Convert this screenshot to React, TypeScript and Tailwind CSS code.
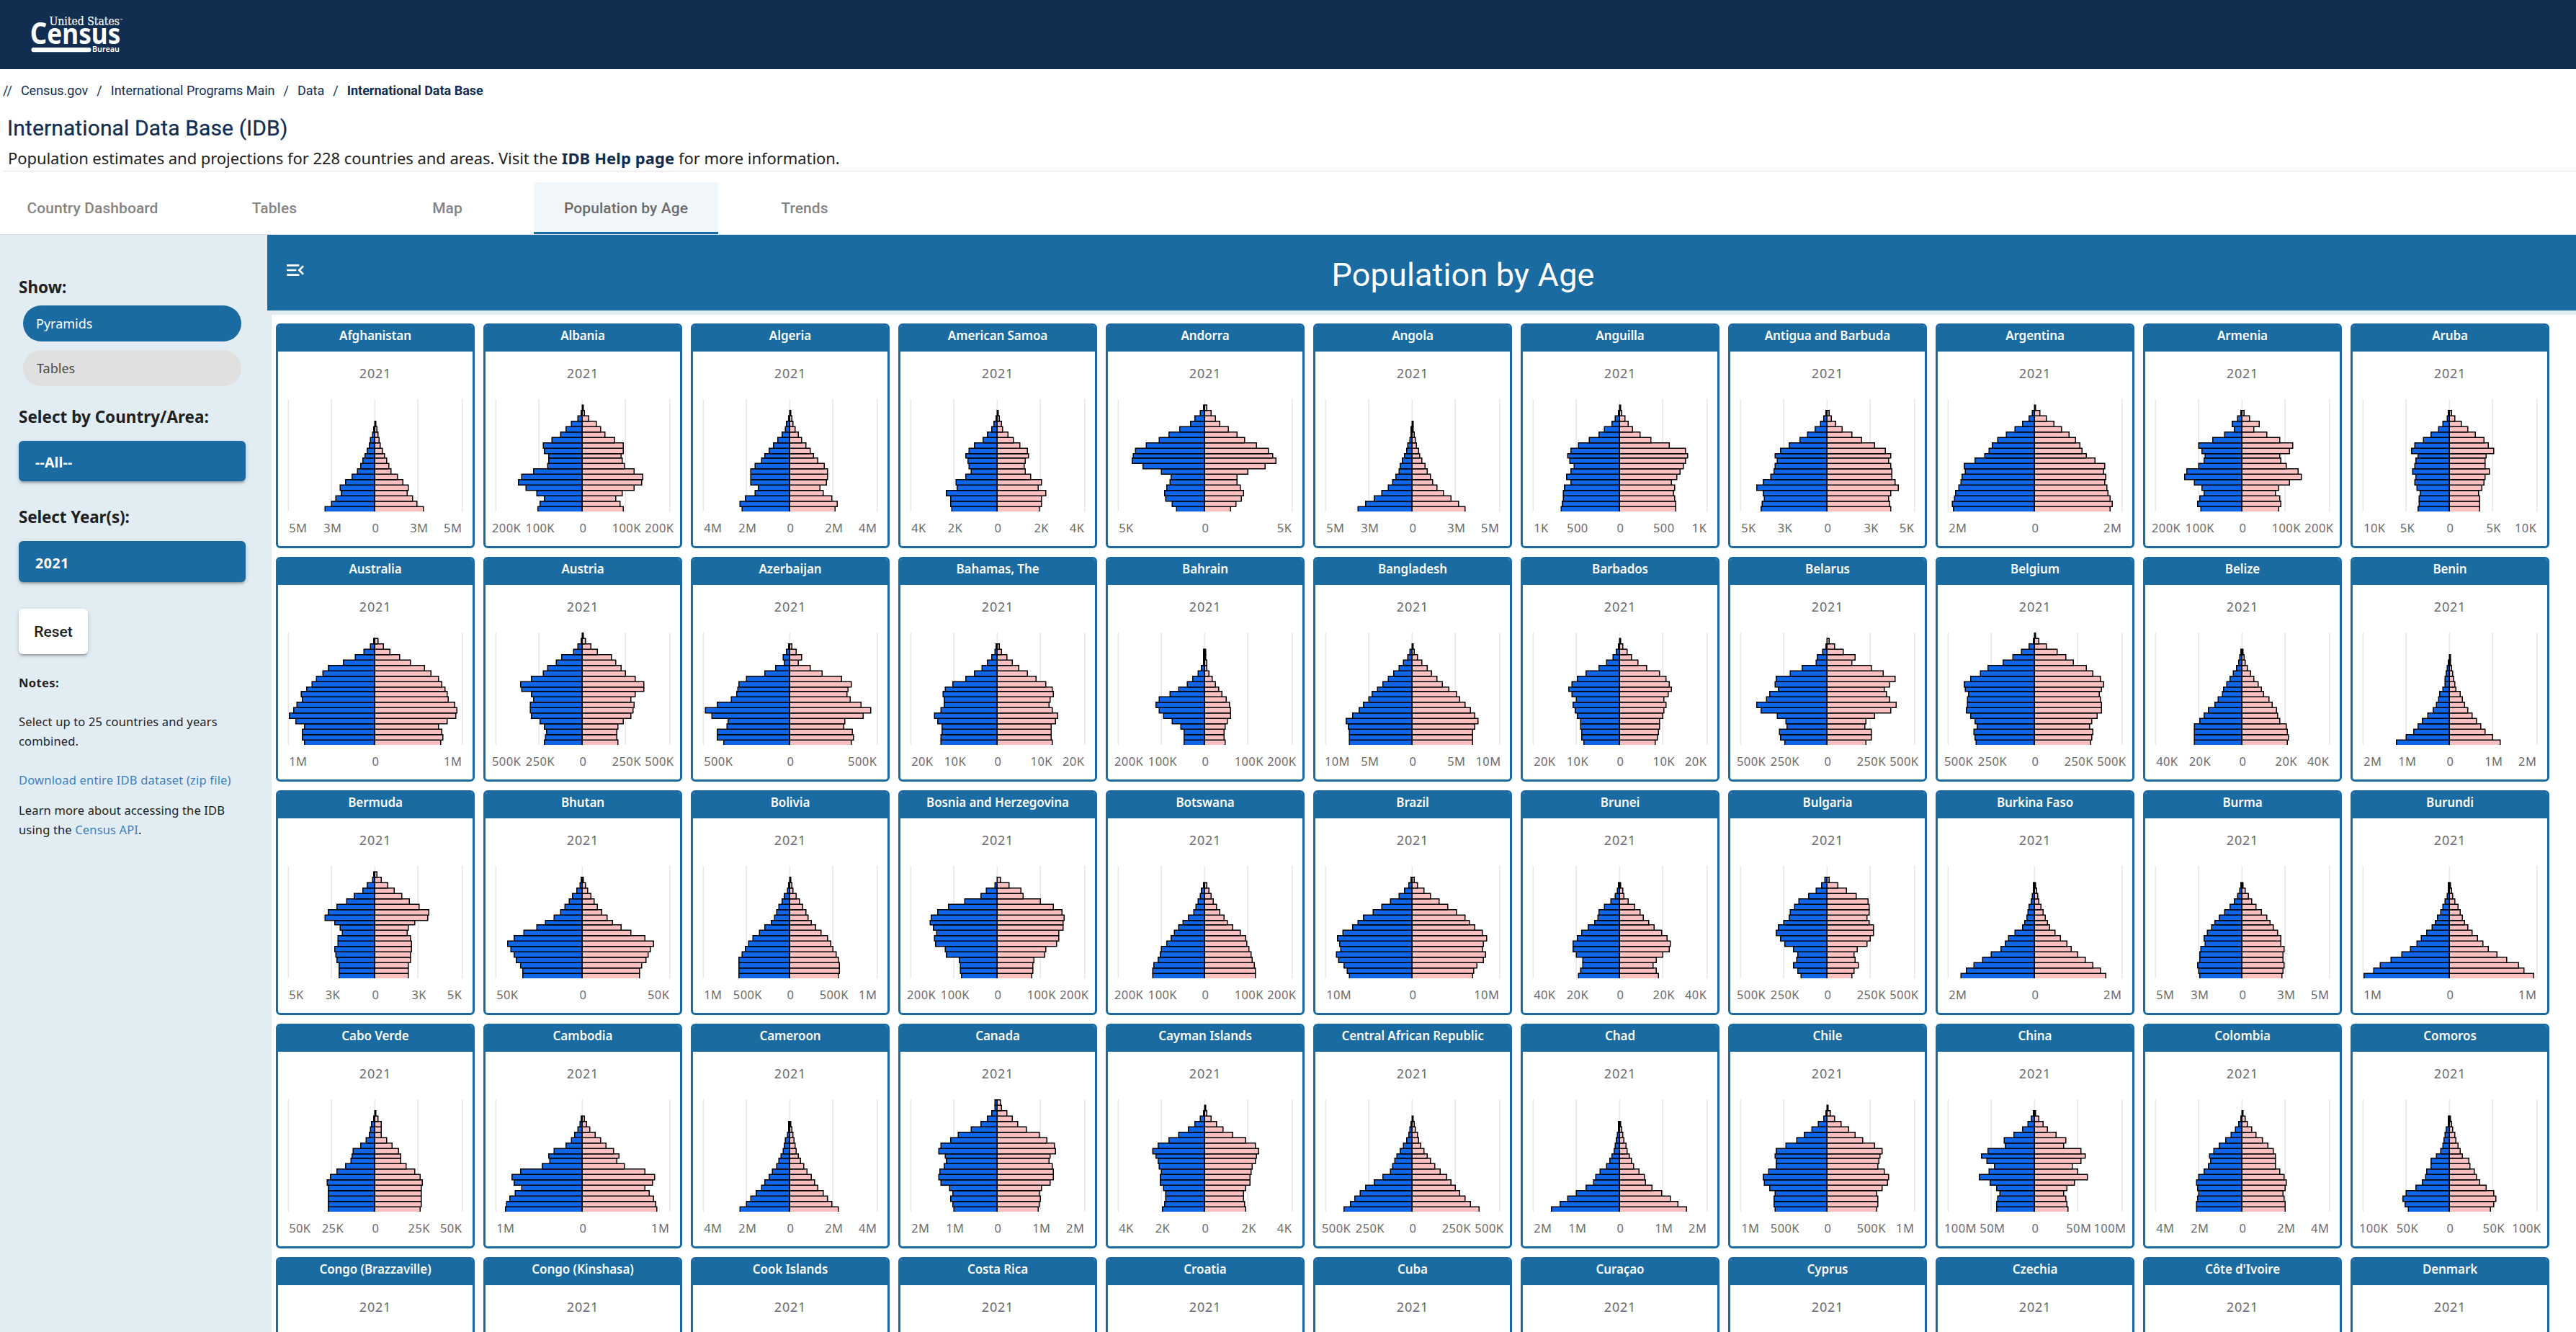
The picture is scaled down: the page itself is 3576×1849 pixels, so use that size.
import React from 'react';

type Pyramid = {
  name: string;
  axis: string[];
  // Bar lengths by five-year age group, youngest first.
  male: number[];
  female: number[];
};

const p = (name: string, axis: string, male: number[] = [], female: number[] = []): Pyramid => ({
  name,
  axis: axis ? axis.split(' ') : [],
  male,
  female,
});

const COUNTRIES: Pyramid[] = [
  p('Afghanistan', '5M 3M', [46,40,36,31,32,27,21,16,13,11,9,7,5,4,2,1,0], [45,39,35,30,31,26,21,15,13,11,9,7,5,4,3,2,1]),
  p('Albania', '200K 100K', [41,39,35,42,52,59,56,45,32,31,31,35,36,28,20,15,10,4,1,0], [38,35,31,37,48,55,56,48,39,37,36,38,38,30,21,17,13,6,2,1]),
  p('Algeria', '4M 2M', [44,46,41,32,29,36,36,36,32,26,23,19,15,11,7,4,3,1,0], [42,44,39,31,28,34,35,35,32,26,22,19,15,11,8,5,3,2,1]),
  p('American Samoa', '4K 2K', [42,43,43,47,37,38,29,24,26,27,29,26,21,13,9,5,3,1,0], [39,41,41,45,38,41,31,26,25,26,29,28,21,15,10,5,4,2,1]),
  p('Andorra', '5K', [26,30,36,37,35,32,31,40,57,67,66,64,54,42,33,23,13,9,4,1], [24,29,34,36,33,30,30,40,56,66,63,59,48,37,30,22,14,10,6,2]),
  p('Angola', '5M 3M', [50,43,35,28,22,18,15,12,11,9,7,5,4,2,1,1,0], [49,43,36,29,23,19,17,14,12,9,7,6,4,3,2,1,1]),
  p('Anguilla', '1K 500', [54,53,52,52,51,45,49,45,42,46,48,45,38,28,19,14,7,4,1,0], [52,52,51,50,51,48,53,56,59,61,63,61,46,29,19,12,8,5,2,1]),
  p('Antigua and Barbuda', '5K 3K', [61,60,58,59,65,59,52,49,48,46,48,43,35,25,18,11,6,3,1], [59,58,57,59,66,63,60,60,59,57,59,54,44,32,23,14,8,4,2]),
  p('Argentina', '2M', [75,76,74,73,70,68,67,64,65,55,46,42,39,34,26,18,11,5,2,0], [70,72,70,68,67,65,66,64,65,56,48,44,42,38,32,25,18,11,5,1]),
  p('Armenia', '200K 100K', [38,41,39,35,37,44,53,51,40,35,34,37,40,27,16,7,9,4,1], [34,36,35,31,34,44,55,52,41,36,35,44,47,35,23,11,16,7,2]),
  p('Aruba', '10K 5K', [29,28,28,27,30,32,31,34,32,31,29,35,32,24,17,10,6,2,1], [28,28,28,27,30,32,33,37,33,33,34,41,36,32,24,17,11,5,2]),
  p('Australia', '1M', [65,67,67,65,73,79,75,72,67,68,63,58,54,48,43,29,18,10,4,1], [61,63,62,59,67,75,76,74,68,67,65,62,59,52,46,33,23,14,8,3]),
  p('Austria', '500K 250K', [35,34,33,35,39,47,48,48,45,47,56,57,47,36,32,24,19,8,4,1,0], [33,32,32,33,38,45,47,48,45,49,57,57,49,40,36,31,27,14,8,3,1]),
  p('Azerbaijan', '500K', [61,67,67,58,57,72,78,67,54,49,48,47,40,23,13,5,6,3,1], [57,59,58,50,51,68,75,66,56,53,54,57,48,30,19,8,11,6,2]),
  p('Bahamas, The', '20K 10K', [52,52,51,51,55,58,52,49,49,50,48,41,29,21,14,9,5,2,1], [51,50,50,50,54,56,51,48,49,52,51,45,36,28,20,14,9,4,2]),
  p('Bahrain', '200K 100K', [19,19,19,22,30,38,42,45,42,32,24,16,11,6,3,1,1,1], [19,18,18,19,21,24,24,23,20,16,13,10,7,4,2,2,1,1]),
  p('Bangladesh', '10M 5M', [58,58,58,59,61,55,49,45,40,37,32,27,22,17,12,8,4,2,0], [56,56,56,58,61,58,54,49,44,41,34,28,23,18,14,9,5,2,1]),
  p('Barbados', '20K 10K', [33,35,35,36,36,39,41,43,40,44,47,44,39,31,19,12,6,3,1,0], [33,35,36,37,37,40,41,43,41,45,48,46,43,37,25,17,11,7,3,1]),
  p('Belarus', '500K 250K', [39,43,44,37,38,46,61,65,56,53,45,48,47,34,23,10,9,4,1,0], [36,41,41,35,36,44,59,64,58,55,53,58,63,52,41,23,26,15,7,2]),
  p('Belgium', '500K 250K', [54,55,56,53,55,59,63,62,62,61,64,65,59,50,43,29,20,12,5,1,0], [52,53,54,51,53,58,62,62,61,60,62,64,61,54,48,36,29,21,11,4,1]),
  p('Belize', '40K 20K', [44,44,44,44,39,35,31,25,22,18,17,14,11,8,5,3,2,1], [42,43,42,41,35,33,32,28,25,20,18,15,11,8,5,3,2,1]),
  p('Benin', '2M 1M', [49,40,33,29,25,20,15,12,10,9,6,4,4,3,2,1,0], [47,40,33,29,25,21,17,14,12,10,6,5,4,3,2,1,1]),
  p('Bermuda', '5K 3K', [33,33,33,35,36,37,34,34,30,32,37,46,43,35,26,19,11,7,2,1], [31,31,31,33,33,34,34,33,30,31,37,49,50,41,32,25,18,12,6,2]),
  p('Bhutan', '50K', [55,55,57,61,63,66,69,63,54,42,34,26,20,16,12,9,5,2,1], [53,53,55,59,61,63,66,58,45,36,28,23,18,14,11,8,5,3,1]),
  p('Bolivia', '1M 500K', [47,47,47,47,44,41,38,34,28,23,17,14,12,10,7,5,2,1,0], [45,46,46,45,43,40,38,35,29,24,20,17,15,12,9,6,3,2,1]),
  p('Bosnia and Herzegovina', '200K 100K', [33,34,34,35,47,48,57,58,56,59,62,61,55,45,30,15,10,2,0], [32,33,33,34,44,45,55,57,57,61,61,62,60,52,40,24,22,11,3]),
  p('Botswana', '200K 100K', [48,48,47,43,41,40,35,31,28,24,20,15,10,8,6,4,3,1], [47,47,46,44,43,41,39,38,33,26,21,18,14,11,8,6,4,2]),
  p('Brazil', '10M', [58,60,63,68,70,66,67,69,64,55,50,45,36,28,20,12,7,3,1], [56,57,60,66,68,65,66,69,65,58,53,49,41,33,25,17,11,5,2]),
  p('Brunei', '40K 20K', [38,36,34,34,40,43,43,39,35,29,23,20,19,14,8,4,2,1], [36,34,31,34,40,46,47,44,39,32,27,22,19,14,8,4,3,1]),
  p('Bulgaria', '500K 250K', [24,27,31,28,27,31,39,43,47,45,40,35,34,30,26,17,10,5,2], [23,25,29,26,25,28,37,40,43,43,39,37,39,39,38,27,18,10,2]),
  p('Burkina Faso', '2M', [68,63,56,48,40,31,27,24,18,11,9,7,6,5,3,2,1,1], [66,61,54,47,40,34,30,24,19,14,12,10,8,6,4,3,2,1]),
  p('Burma', '5M 3M', [39,40,41,39,39,38,34,35,32,28,25,21,16,11,7,4,2,1], [37,38,39,38,38,39,36,36,33,29,26,23,18,13,9,6,3,1]),
  p('Burundi', '1M', [79,70,64,54,44,36,30,26,21,16,13,11,8,6,4,2,1,1], [78,69,64,53,44,36,31,26,21,17,14,12,10,8,5,3,2,1]),
  p('Cabo Verde', '50K 25K', [43,43,43,43,43,44,41,35,27,22,21,20,13,8,5,4,3,1,0], [42,43,43,43,43,44,42,37,29,24,24,22,16,11,6,6,6,3,1]),
  p('Cambodia', '1M', [71,70,67,62,56,63,65,57,37,30,31,26,15,10,7,4,2,1], [69,68,66,62,58,65,67,58,39,32,34,29,22,17,12,7,4,2]),
  p('Cameroon', '4M 2M', [46,40,36,31,26,23,19,16,12,10,8,6,5,4,2,1,1], [45,39,35,31,26,23,20,16,13,10,8,6,5,4,3,2,1]),
  p('Canada', '2M 1M', [40,41,43,41,44,52,54,53,49,47,48,54,52,43,36,24,15,9,5,2,2], [38,39,40,39,41,49,52,52,51,48,49,54,53,46,39,27,19,14,9,4,3]),
  p('Cayman Islands', '4K 2K', [39,37,36,36,38,41,41,40,42,43,45,48,43,33,24,15,9,4,1,0], [38,37,36,36,38,42,42,43,44,47,48,50,47,38,26,17,11,6,2,1]),
  p('Central African Republic', '500K 250K', [63,57,53,48,43,35,27,20,18,16,14,11,8,5,3,2,1,0], [62,54,49,44,40,36,32,26,21,17,14,11,8,6,5,3,2,1]),
  p('Chad', '2M 1M', [63,55,48,40,31,24,22,18,12,9,7,5,4,3,2,1,1], [62,54,47,39,30,24,23,18,13,11,9,7,6,4,3,2,1]),
  p('Chile', '1M 500K', [48,49,49,48,53,58,59,54,47,47,48,47,38,28,21,14,8,3,1,0], [46,47,47,46,51,56,57,53,47,48,49,51,44,33,26,20,13,7,3,1]),
  p('China', '100M 50M', [35,35,34,32,35,41,51,42,37,44,49,43,27,28,19,11,6,3,1], [31,30,29,27,30,37,49,40,35,43,47,43,27,29,20,12,8,4,1]),
  p('Colombia', '4M 2M', [42,42,41,40,41,42,40,35,31,29,30,26,21,15,10,6,3,1,0], [40,40,39,38,40,41,39,35,31,31,31,29,24,19,13,9,5,3,1]),
  p('Comoros', '100K 50K', [38,41,43,40,31,25,22,21,17,17,12,8,6,5,4,3,1,1], [38,41,43,41,34,28,25,23,19,18,12,10,8,6,5,3,2,1]),
  ...['Congo (Brazzaville)', 'Congo (Kinshasa)', 'Cook Islands', 'Costa Rica', 'Croatia', 'Cuba', 'Curaçao', 'Cyprus', 'Czechia', "Côte d'Ivoire", 'Denmark'].map((n) => p(n, '')),
];

// Upper edge of the bar for each age group, youngest first; the plot is 104 units high.
const TOPS = [99.5, 94.5, 89.5, 84.5, 79.5, 74.5, 69.5, 64.5, 59.5, 54.5, 50.5, 45.5, 40.5, 35.5, 30.5, 25.5, 20.5, 15.5, 10.5, 5.5, 0.5];
const barHeight = (i: number) => (i === 0 ? 5 : TOPS[i - 1] - TOPS[i]);
const MID = 89.5;

function PyramidChart({ axis, male, female }: Pyramid) {
  const [outer, inner] = axis;
  const crowded = !!inner && outer.length === 4;
  const inset = crowded ? 6 : inner && outer === '10M' ? 8.6 : 10.1;
  const lines = inner ? [9.5, 49.5, 89.5, 129.5, 170.5] : [9.5, 89.5, 170.5];
  return (
    <svg viewBox="0 0 180 136" className="block h-[204px] w-[270px]">
      <svg x="0" y="0" width="180" height="104" viewBox="0 0 180 104">
        {lines.map((x) => (
          <line key={x} x1={x} x2={x} y1="0" y2="104" stroke="#e6e6e6" />
        ))}
        <g stroke="#000" fill="#0f66e8">
          {male.map((w, i) => (
            <rect key={i} x={MID - w} y={TOPS[i]} width={w} height={barHeight(i)} />
          ))}
        </g>
        <g stroke="#000" fill="#fcc0c0">
          {female.map((w, i) => (
            <rect key={i} x={MID} y={TOPS[i]} width={w} height={barHeight(i)} />
          ))}
        </g>
      </svg>
      <g className="fill-[#6b6b6b] font-['Noto_Sans',sans-serif] text-[11px] tracking-[0.28px]">
        <text x={inset} y="123.6">{outer}</text>
        {inner && <text x="50.6" y="123.6" textAnchor="middle">{inner}</text>}
        <text x="90.3" y="123.6" textAnchor="middle">0</text>
        {inner && <text x="130.5" y="123.6" textAnchor="middle">{inner}</text>}
        <text x={180.3 - inset} y="123.6" textAnchor="end">{outer}</text>
      </g>
    </svg>
  );
}

function CountryCard(country: Pyramid) {
  return (
    <section className="h-[312px] overflow-hidden rounded-[6px] border-[3px] border-[#196ba1] bg-white text-center">
      <h3 className="h-9 bg-[#196ba1] text-[17px] leading-[28px] font-semibold tracking-[-0.1px] text-white">{country.name}</h3>
      <div className="h-[66px] text-[18px] leading-[60px] tracking-[0.8px] text-[#6b6b6b]">2021</div>
      {country.axis.length > 0 && <PyramidChart {...country} />}
    </section>
  );
}

function CensusLogo() {
  return (
    <svg viewBox="0 0 140 60" className="h-[60px] w-[140px] overflow-visible" fill="#fff">
      <text x="28.5" y="17.2" fontSize="16.5" textLength="97.5" lengthAdjust="spacingAndGlyphs" className="font-['DejaVu_Serif',serif]" stroke="#fff" strokeWidth="0.2">United States</text>
      <text x="126.8" y="11" fontSize="4.5" className="font-['Noto_Sans',sans-serif]">™</text>
      <text x="1.8" y="42.6" fontSize="41" fontWeight="700" textLength="23.5" lengthAdjust="spacingAndGlyphs" className="font-['Noto_Sans',sans-serif]">C</text>
      <text x="25.3" y="42.6" fontSize="40" fontWeight="700" textLength="102" lengthAdjust="spacingAndGlyphs" className="font-['Noto_Sans',sans-serif]">ensus</text>
      <rect x="3.5" y="48" width="83" height="6.2" rx="3" />
      <text x="88" y="53.8" fontSize="11.5" fontWeight="600" textLength="38" lengthAdjust="spacingAndGlyphs" className="font-['Noto_Sans',sans-serif]">Bureau</text>
    </svg>
  );
}

const raised = 'shadow-[0_4px_2px_-3px_rgba(0,0,0,.2),0_3px_3px_rgba(0,0,0,.14),0_2px_7px_rgba(0,0,0,.12)]';

function Sidebar() {
  return (
    <aside className="w-[371px] shrink-0 bg-[#e2edf3] pt-[56px] pr-[30px] pl-[26px] text-[#212121]">
      <h2 className="text-[22.5px] leading-[34px] font-bold">Show:</h2>
      <div className="mt-2 ml-[6px] flex flex-col gap-3 text-[18px]">
        <div className="flex h-[50px] w-[303px] items-center rounded-full bg-[#196ba1] pt-px pl-[18px] text-white">Pyramids</div>
        <div className="flex h-[50px] w-[303px] items-center rounded-full bg-[#e0e0e0] pt-px pl-[19px] text-[#4a4a4a]">Tables</div>
      </div>
      <h2 className="mt-[26px] text-[22.5px] leading-[34px] font-bold">Select by Country/Area:</h2>
      <div className={`mt-4 flex h-[56px] items-center rounded-[6px] bg-[#196ba1] pt-1 pl-[23px] text-[19.5px] font-bold tracking-[0.2px] text-white ${raised}`}>--All--</div>
      <h2 className="mt-[33px] text-[22.5px] leading-[34px] font-bold tracking-[-0.15px]">Select Year(s):</h2>
      <div className={`mt-4 flex h-[57px] items-center rounded-[6px] bg-[#196ba1] pt-1 pl-[23px] text-[19.5px] font-bold tracking-[0.6px] text-white ${raised}`}>2021</div>
      <button className={`mt-[37px] flex h-[63px] w-[96px] items-center justify-center rounded-[6px] bg-white pt-[3px] font-['Roboto',sans-serif] text-[21px] font-medium ${raised}`}>Reset</button>
      <div className="text-[16.5px] leading-[27px] tracking-[0.15px] whitespace-nowrap">
        <p className="mt-[26px] font-bold tracking-[0.4px]">Notes:</p>
        <p className="mt-[27px]">Select up to 25 countries and years<br />combined.</p>
        <p className="mt-[27px] tracking-[0.2px] text-[#3d7fbd]">Download entire IDB dataset (zip file)</p>
        <p className="mt-[15px]">Learn more about accessing the IDB<br />using the <span className="text-[#3d7fbd]">Census API</span>.</p>
      </div>
    </aside>
  );
}

const tabBase = 'flex h-[72px] items-center justify-center pt-[2px]';

export default function App() {
  return (
    <div className="flex h-[1849px] w-full flex-col overflow-hidden bg-white font-['Noto_Sans',sans-serif] text-[#212121]">
      <header className="h-[96px] shrink-0 bg-[#112e51] pt-[18px] pl-[40px]">
        <CensusLogo />
      </header>
      <nav className="flex h-[58px] shrink-0 items-center gap-[12px] pl-1 font-['Roboto',sans-serif] text-[18px] text-[#112e51]">
        <span>//</span><span>Census.gov</span><span>/</span><span>International Programs Main</span><span>/</span><span>Data</span><span>/</span><span className="font-bold">International Data Base</span>
      </nav>
      <h1 className="h-[48px] shrink-0 pl-[10px] font-['Roboto',sans-serif] text-[30px] leading-[48px] font-normal tracking-[0.12px] text-[#112e51] [-webkit-text-stroke:0.3px_#112e51]">International Data Base (IDB)</h1>
      <p className="h-[35px] shrink-0 pl-[11px] text-[22px] leading-[35px] tracking-[-0.06px] text-[#212121]">
        Population estimates and projections for 228 countries and areas. Visit the <b className="tracking-[0.1px] text-[#112e51]">IDB Help page</b> for more information.
      </p>
      <div className="ml-1 h-px shrink-0 bg-[#e2e4e6]" />
      <div className="flex shrink-0 border-b border-[#dcdfe1] pt-[15px] font-['Roboto',sans-serif] text-[21px] font-medium tracking-[0.08px] text-[#858585]">
        <div className={`${tabBase} w-[261px] pr-[4px]`}>Country Dashboard</div>
        <div className={`${tabBase} w-[240px]`}>Tables</div>
        <div className={`${tabBase} w-[240px]`}>Map</div>
        <div className="flex h-[72px] w-[256px] items-center justify-center border-b-[3px] border-[#196ba1] bg-[#f0f6f9] pt-[5px] text-[#6a6b6c]">Population by Age</div>
        <div className={`${tabBase} w-[240px]`}>Trends</div>
      </div>
      <div className="flex min-h-0 grow">
        <Sidebar />
        <main className="flex min-w-0 grow flex-col">
          <div className="flex h-[105px] shrink-0 bg-[#196ba1] text-white">
            <div className="w-[115px] pt-[33px] pl-[23px]">
              <svg viewBox="0 0 24 24" className="h-8 w-8" fill="currentColor">
                <path d="M3 18h13v-2H3v2zm0-5h10v-2H3v2zm0-7v2h13V6H3zm18 9.59L17.42 12 21 8.41 19.59 7l-5 5 5 5L21 15.59z" />
              </svg>
            </div>
            <h2 className="grow pt-[3px] text-center font-['Roboto',sans-serif] text-[45px] leading-[105px] tracking-[0.15px]">Population by Age</h2>
          </div>
          <div className="min-h-0 grow border-t-[6px] border-l-[6px] border-[#e2edf3] pt-3 pl-[6px]">
            <div className="grid grid-cols-[repeat(11,276px)] gap-3">
              {COUNTRIES.map((c) => (
                <CountryCard key={c.name} {...c} />
              ))}
            </div>
          </div>
        </main>
      </div>
    </div>
  );
}
